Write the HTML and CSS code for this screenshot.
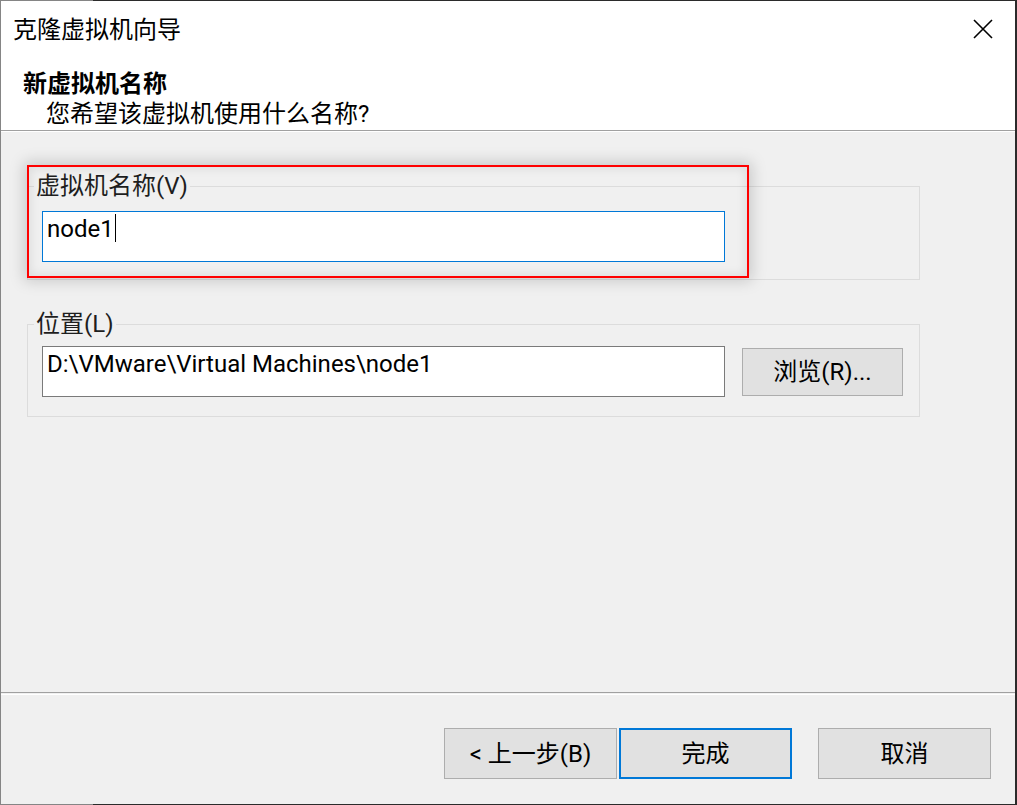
FILE: index.html
```html
<!DOCTYPE html>
<html lang="zh-CN">
<head>
<meta charset="utf-8">
<title>克隆虚拟机向导</title>
<link rel="stylesheet" href="styles.css">
</head>
<body>
<div class="frame">
  <div class="window">
    <div class="top">
      <div class="titlebar">
        <span class="title">克隆虚拟机向导</span>
        <span class="close">
          <svg width="20" height="20" viewBox="0 0 20 20"><path d="M1 1 L19 19 M19 1 L1 19" stroke="#000" stroke-width="1.6" fill="none"/></svg>
        </span>
      </div>
      <div class="header">
        <div class="h-title">新虚拟机名称</div>
        <div class="h-sub">您希望该虚拟机使用什么名称?</div>
      </div>
    </div>
    <div class="body">
      <fieldset class="group g1">
        <legend>虚拟机名称(V)</legend>
        <div class="group-inner">
          <div class="field focus">node1<span class="caret"></span></div>
        </div>
      </fieldset>
      <fieldset class="group g2">
        <legend>位置(L)</legend>
        <div class="group-inner row">
          <div class="field">D:\VMware\Virtual Machines\node1</div>
          <div class="btn browse">浏览(R)...</div>
        </div>
      </fieldset>
      <div class="highlight"></div>
    </div>
    <div class="footer">
      <div class="btn wbtn back">&lt; 上一步(B)</div>
      <div class="btn wbtn finish">完成</div>
      <div class="btn wbtn">取消</div>
    </div>
  </div>
</div>
</body>
</html>
```
FILE: styles.css
```css
* { box-sizing: border-box; }
html, body { margin: 0; padding: 0; }
body {
  font-family: Roboto, "Noto Sans CJK SC", sans-serif;
  font-size: 24px;
  color: #000;
  background: #fff;
}
.frame {
  width: 1017px;
  height: 805px;
  padding: 1px 2px 1px 1px;
  background: linear-gradient(to right, #858585 93px, #2b2b2b 93px);
}
.window {
  height: 803px;
  display: flex;
  flex-direction: column;
  background: #f0f0f0;
}
.top {
  background: #fff;
  height: 130px;
  border-bottom: 1px solid #a0a0a0;
  flex: none;
}
.titlebar {
  height: 58px;
  display: flex;
  align-items: center;
  justify-content: space-between;
  padding: 0 22px 0 12px;
}
.title { line-height: 1; }
.close { display: flex; margin-bottom: 3px; }
.header { padding: 10px 0 0 22px; }
.h-title { font-weight: bold; line-height: 31px; }
.h-sub { padding-left: 23px; line-height: 29px; }

.body {
  flex: 1;
  position: relative;
  border-top: 1px solid #fff;
  padding-top: 39px;
}
.group {
  margin: 0 95px 0 26px;
  border: 1px solid #dcdcdc;
  padding: 0;
  min-width: 0;
}
.group legend {
  margin-left: 6px;
  padding: 0 2px;
  line-height: 30px;
  color: #1e1e1e;
}
.g2 { margin-top: 29px; }
.group-inner { padding: 10px 16px 17px 14px; }
.g2 .group-inner { padding: 7px 16px 19px 14px; }
.row { display: flex; align-items: center; }
.field {
  flex: none;
  width: 683px;
  height: 51px;
  border: 1px solid #7a7a7a;
  background: #fff;
  padding: 1px 4px 0 4px;
  line-height: 32px;
  white-space: nowrap;
}
.field.focus { border-color: #0078d7; }
.caret {
  display: inline-block;
  width: 1px;
  height: 28px;
  background: #000;
  vertical-align: -5px;
  margin-left: 1px;
}
.btn {
  display: flex;
  align-items: center;
  justify-content: center;
  background: #e1e1e1;
  border: 1px solid #adadad;
  line-height: 1;
}
.browse {
  width: 161px;
  height: 48px;
  margin-left: 17px;
}
.highlight {
  position: absolute;
  left: 26px;
  top: 33px;
  width: 722px;
  height: 113px;
  border: 2px solid #ff0000;
  box-shadow: 0 0 14px 3px rgba(0, 0, 0, 0.17), inset 0 0 10px 2px rgba(0, 0, 0, 0.08);
  pointer-events: none;
}
.footer {
  flex: none;
  height: 112px;
  border-top: 1px solid #a0a0a0;
  box-shadow: inset 0 1px 0 #f0f0f0, inset 0 2px 0 #fff;
  display: flex;
  justify-content: flex-end;
  align-items: flex-start;
  padding: 35px 24px 0 0;
}
.wbtn { width: 173px; height: 51px; }
.back { margin-right: 2px; }
.finish { margin-right: 26px; border: 2px solid #0078d7; }
```
